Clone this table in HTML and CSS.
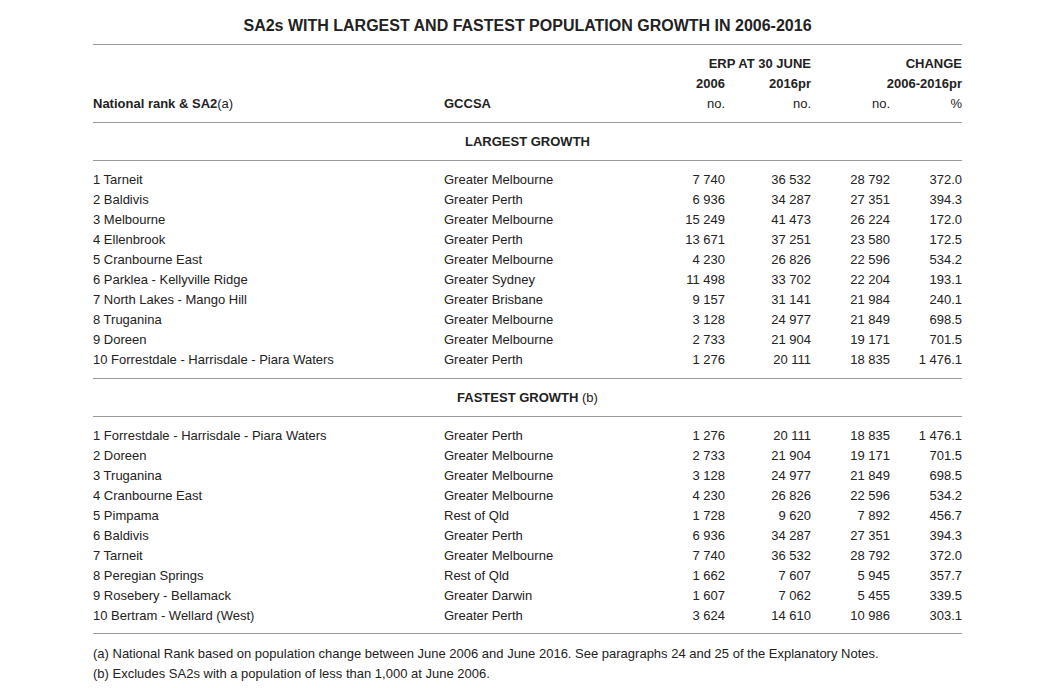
FILE: index.html
```html
<!DOCTYPE html>
<html lang="en">
<head>
<meta charset="utf-8">
<title>SA2s with largest and fastest population growth</title>
<link rel="stylesheet" href="styles.css">
</head>
<body>
<div class="page">
  <h1 class="title">SA2s WITH LARGEST AND FASTEST POPULATION GROWTH IN 2006-2016</h1>
  <table class="tbl">
    <colgroup>
      <col class="c-name"><col class="c-city"><col class="c-n1"><col class="c-n2"><col class="c-n3"><col class="c-n4">
    </colgroup>
    <thead>
      <tr class="h1">
        <th></th><th></th><th colspan="2" class="num">ERP AT 30 JUNE</th><th colspan="2" class="num">CHANGE</th>
      </tr>
      <tr class="h2">
        <th></th><th></th><th class="num">2006</th><th class="num">2016pr</th><th colspan="2" class="num">2006-2016pr</th>
      </tr>
      <tr class="h3">
        <th class="txt">National rank &amp; SA2<span class="norm">(a)</span></th><th class="txt">GCCSA</th><th class="num norm">no.</th><th class="num norm">no.</th><th class="num norm">no.</th><th class="num norm">%</th>
      </tr>
    </thead>
    <tbody class="grp g1">
      <tr class="sec"><th colspan="6">LARGEST GROWTH</th></tr>
      <tr class="first"><td>1 Tarneit</td><td>Greater Melbourne</td><td class="num">7 740</td><td class="num">36 532</td><td class="num">28 792</td><td class="num">372.0</td></tr>
      <tr><td>2 Baldivis</td><td>Greater Perth</td><td class="num">6 936</td><td class="num">34 287</td><td class="num">27 351</td><td class="num">394.3</td></tr>
      <tr><td>3 Melbourne</td><td>Greater Melbourne</td><td class="num">15 249</td><td class="num">41 473</td><td class="num">26 224</td><td class="num">172.0</td></tr>
      <tr><td>4 Ellenbrook</td><td>Greater Perth</td><td class="num">13 671</td><td class="num">37 251</td><td class="num">23 580</td><td class="num">172.5</td></tr>
      <tr><td>5 Cranbourne East</td><td>Greater Melbourne</td><td class="num">4 230</td><td class="num">26 826</td><td class="num">22 596</td><td class="num">534.2</td></tr>
      <tr><td>6 Parklea - Kellyville Ridge</td><td>Greater Sydney</td><td class="num">11 498</td><td class="num">33 702</td><td class="num">22 204</td><td class="num">193.1</td></tr>
      <tr><td>7 North Lakes - Mango Hill</td><td>Greater Brisbane</td><td class="num">9 157</td><td class="num">31 141</td><td class="num">21 984</td><td class="num">240.1</td></tr>
      <tr><td>8 Truganina</td><td>Greater Melbourne</td><td class="num">3 128</td><td class="num">24 977</td><td class="num">21 849</td><td class="num">698.5</td></tr>
      <tr><td>9 Doreen</td><td>Greater Melbourne</td><td class="num">2 733</td><td class="num">21 904</td><td class="num">19 171</td><td class="num">701.5</td></tr>
      <tr class="last"><td>10 Forrestdale - Harrisdale - Piara Waters</td><td>Greater Perth</td><td class="num">1 276</td><td class="num">20 111</td><td class="num">18 835</td><td class="num">1 476.1</td></tr>
    </tbody>
    <tbody class="grp g2">
      <tr class="sec"><th colspan="6">FASTEST GROWTH <span class="norm">(b)</span></th></tr>
      <tr class="first"><td>1 Forrestdale - Harrisdale - Piara Waters</td><td>Greater Perth</td><td class="num">1 276</td><td class="num">20 111</td><td class="num">18 835</td><td class="num">1 476.1</td></tr>
      <tr><td>2 Doreen</td><td>Greater Melbourne</td><td class="num">2 733</td><td class="num">21 904</td><td class="num">19 171</td><td class="num">701.5</td></tr>
      <tr><td>3 Truganina</td><td>Greater Melbourne</td><td class="num">3 128</td><td class="num">24 977</td><td class="num">21 849</td><td class="num">698.5</td></tr>
      <tr><td>4 Cranbourne East</td><td>Greater Melbourne</td><td class="num">4 230</td><td class="num">26 826</td><td class="num">22 596</td><td class="num">534.2</td></tr>
      <tr><td>5 Pimpama</td><td>Rest of Qld</td><td class="num">1 728</td><td class="num">9 620</td><td class="num">7 892</td><td class="num">456.7</td></tr>
      <tr><td>6 Baldivis</td><td>Greater Perth</td><td class="num">6 936</td><td class="num">34 287</td><td class="num">27 351</td><td class="num">394.3</td></tr>
      <tr><td>7 Tarneit</td><td>Greater Melbourne</td><td class="num">7 740</td><td class="num">36 532</td><td class="num">28 792</td><td class="num">372.0</td></tr>
      <tr><td>8 Peregian Springs</td><td>Rest of Qld</td><td class="num">1 662</td><td class="num">7 607</td><td class="num">5 945</td><td class="num">357.7</td></tr>
      <tr><td>9 Rosebery - Bellamack</td><td>Greater Darwin</td><td class="num">1 607</td><td class="num">7 062</td><td class="num">5 455</td><td class="num">339.5</td></tr>
      <tr class="last"><td>10 Bertram - Wellard (West)</td><td>Greater Perth</td><td class="num">3 624</td><td class="num">14 610</td><td class="num">10 986</td><td class="num">303.1</td></tr>
    </tbody>
  </table>
  <div class="notes">
    <p>(a) National Rank based on population change between June 2006 and June 2016. See paragraphs 24 and 25 of the Explanatory Notes.</p>
    <p>(b) Excludes SA2s with a population of less than 1,000 at June 2006.</p>
  </div>
</div>
<div class="shade"></div>
</body>
</html>
```

FILE: styles.css
```css
html, body {
  margin: 0;
  padding: 0;
  background: #ffffff;
}
body {
  font-family: "Liberation Sans", Arial, sans-serif;
  color: #222222;
  font-size: 13px;
  line-height: 20px;
  position: relative;
  min-height: 688px;
}
.page {
  width: 869px;
  margin-left: 93px;
}
.title {
  margin: 0;
  padding-top: 17px;
  height: 27px;
  font-size: 16px;
  line-height: 18px;
  font-weight: bold;
  text-align: center;
  color: #222222;
}
.tbl {
  width: 869px;
  border-collapse: separate;
  border-spacing: 0;
  table-layout: fixed;
}
.c-name { width: 351px; }
.c-city { width: 196px; }
.c-n1 { width: 85px; }
.c-n2 { width: 86px; }
.c-n3 { width: 79px; }
.c-n4 { width: 72px; }
.tbl th, .tbl td {
  padding: 2px 0 0;
  line-height: 18px;
  white-space: nowrap;
  vertical-align: top;
  text-align: left;
}
.tbl th { font-weight: bold; }
.tbl .num { text-align: right; }
.tbl .norm { font-weight: normal; }
.tbl .txt { text-align: left; }
.h1 th {
  border-top: 1px solid #9a9a9a;
  padding-top: 10px;
}
.h3 th {
  padding-bottom: 9px;
  border-bottom: 1px solid #9a9a9a;
}
.sec th {
  text-align: center;
  padding-top: 10px;
  padding-bottom: 9px;
  border-bottom: 1px solid #9a9a9a;
}
.first td { padding-top: 10px; }
.g1 .last td {
  padding-bottom: 9px;
  border-bottom: 1px solid #9a9a9a;
}
.g2 .last td {
  padding-bottom: 8px;
  border-bottom: 1px solid #9a9a9a;
}
.notes {
  padding-top: 9px;
}
.notes p {
  margin: 0;
  padding-top: 2px;
  line-height: 18px;
}
.shade {
  position: absolute;
  left: 0;
  right: 0;
  top: 680px;
  height: 8px;
  background: linear-gradient(#fbfbfb, #f4f4f4);
  z-index: -1;
}
```
